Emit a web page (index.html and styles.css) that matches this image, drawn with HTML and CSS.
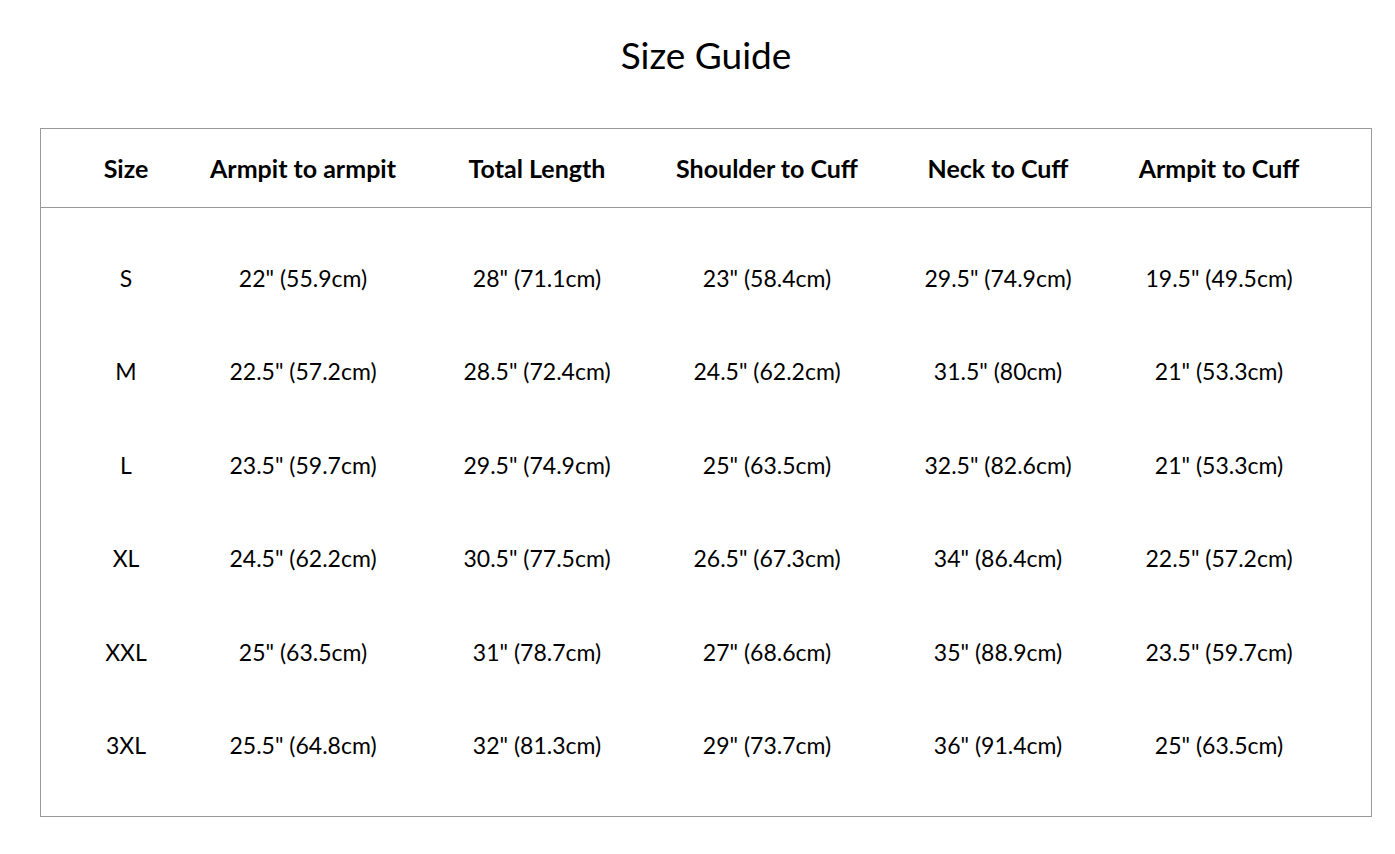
FILE: index.html
```html
<!DOCTYPE html>
<html>
<head>
<meta charset="utf-8">
<link rel="stylesheet" href="styles.css">
</head>
<body>
<div class="page">
  <h1 class="title">Size Guide</h1>
  <div class="chart">
    <div class="row head">
      <div>Size</div><div>Armpit to armpit</div><div>Total Length</div><div>Shoulder to Cuff</div><div>Neck to Cuff</div><div>Armpit to Cuff</div>
    </div>
    <div class="body">
      <div class="row"><div>S</div><div>22" (55.9cm)</div><div>28" (71.1cm)</div><div>23" (58.4cm)</div><div>29.5" (74.9cm)</div><div>19.5" (49.5cm)</div></div>
      <div class="row"><div>M</div><div>22.5" (57.2cm)</div><div>28.5" (72.4cm)</div><div>24.5" (62.2cm)</div><div>31.5" (80cm)</div><div>21" (53.3cm)</div></div>
      <div class="row"><div>L</div><div>23.5" (59.7cm)</div><div>29.5" (74.9cm)</div><div>25" (63.5cm)</div><div>32.5" (82.6cm)</div><div>21" (53.3cm)</div></div>
      <div class="row"><div>XL</div><div>24.5" (62.2cm)</div><div>30.5" (77.5cm)</div><div>26.5" (67.3cm)</div><div>34" (86.4cm)</div><div>22.5" (57.2cm)</div></div>
      <div class="row"><div>XXL</div><div>25" (63.5cm)</div><div>31" (78.7cm)</div><div>27" (68.6cm)</div><div>35" (88.9cm)</div><div>23.5" (59.7cm)</div></div>
      <div class="row"><div>3XL</div><div>25.5" (64.8cm)</div><div>32" (81.3cm)</div><div>29" (73.7cm)</div><div>36" (91.4cm)</div><div>25" (63.5cm)</div></div>
    </div>
  </div>
</div>
</body>
</html>
```
FILE: styles.css
```css
html, body {
  margin: 0;
  padding: 0;
  background: #fff;
}
body {
  font-family: Lato, "Open Sans", sans-serif;
  color: #000;
}
.page {
  width: 1332px;
  margin-left: 40px;
  padding-top: 33px;
}
.title {
  margin: 0;
  text-align: center;
  font-weight: 400;
  font-size: 37px;
  line-height: 44px;
  color: #000;
}
.chart {
  margin-top: 51px;
  border: 1px solid #999;
}
.row {
  display: grid;
  grid-template-columns: 120px 234px 234px 226px 236px 206px;
  padding-left: 25px;
  align-items: center;
  text-align: center;
  font-size: 23px;
  height: 93.4px;
}
.row.head {
  height: 78px;
  font-size: 25px;
  font-weight: 700;
  border-bottom: 1px solid #999;
}
.body {
  padding: 23.3px 0 24.3px;
}
```
